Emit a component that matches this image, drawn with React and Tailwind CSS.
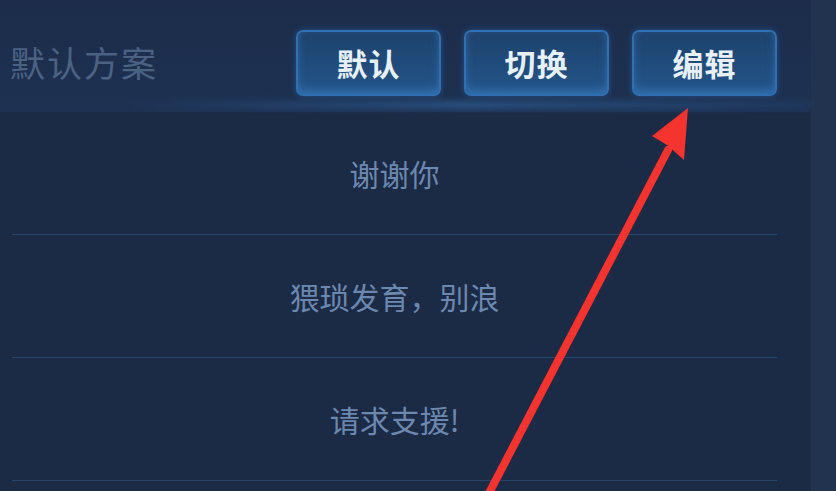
const FONT = { fontFamily: '"Noto Sans CJK SC", "Noto Sans", sans-serif' };

const buttons = ["默认", "切换", "编辑"];
const phrases = ["谢谢你", "猥琐发育，别浪", "请求支援!"];

function SchemeButton({ label }) {
  return (
    <button className="w-[145px] h-[66px] rounded-[7px] border-2 border-[#2f6fb3] bg-gradient-to-b from-[#1d426c] to-[#235589] shadow-[inset_0_-4px_8px_rgba(80,160,240,0.35),0_0_6px_rgba(60,140,230,0.35)] text-[31px] font-semibold text-[#e8f0fa] tracking-[1px]">
      {label}
    </button>
  );
}

function Arrow() {
  return (
    <svg className="absolute inset-0 pointer-events-none" width="836" height="491" viewBox="0 0 836 491">
      <line x1="488" y1="495" x2="668" y2="150" stroke="#f5332f" strokeWidth="8" strokeLinecap="round" />
      <polygon points="688,108 652,136 667,145 684,160" fill="#f5332f" />
    </svg>
  );
}

export default function App() {
  return (
    <div className="relative w-[836px] h-[491px] overflow-hidden bg-[#1b2a45] flex" style={FONT}>
      <div className="w-[810px] flex flex-col">
        {/* Header */}
        <div className="relative h-[112px] flex items-center justify-between pt-[14px] pl-[10px] pr-[33px] bg-gradient-to-b from-[#1c2c4a] to-[#1e3152]">
          <div className="text-[35px] text-[#4b6283] tracking-[2px] -mt-[2px]">默认方案</div>
          <div className="flex gap-[23px]">
            {buttons.map((b) => (
              <SchemeButton key={b} label={b} />
            ))}
          </div>
          <div className="absolute left-[120px] right-0 bottom-[3px] h-[8px] bg-gradient-to-r from-transparent via-[#2c5a8e] to-[#1f3a60] blur-[3px] opacity-80" />
        </div>

        {/* Phrase list */}
        <div className="flex flex-col pl-[12px] pr-[33px]">
          {phrases.map((p) => (
            <div key={p} className="flex flex-col">
              <div className="h-[122px] flex items-center justify-center text-[30px] text-[#6d88ae]">
                {p}
              </div>
              <div className="h-[1px] bg-[#28456b]" />
            </div>
          ))}
        </div>
      </div>
      <div className="flex-1 bg-[#22334f] border-l border-[#1f2f4b]" />
      <Arrow />
    </div>
  );
}
